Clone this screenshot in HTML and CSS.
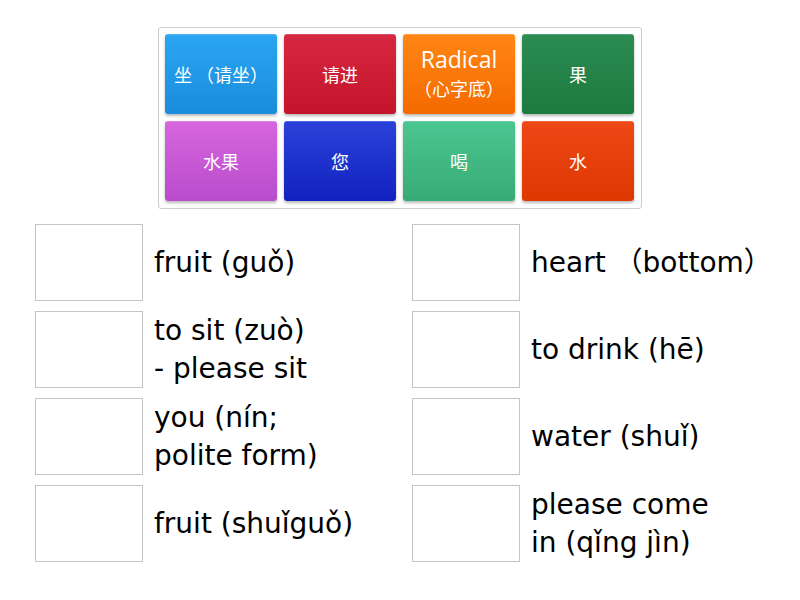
FILE: index.html
```html
<!DOCTYPE html>
<html lang="en">
<head>
<meta charset="utf-8">
<title>Match up</title>
<link rel="stylesheet" href="styles.css">
</head>
<body>
<div class="panel">
  <div class="tile blue"><span class="cjk">坐 （请坐）</span></div>
  <div class="tile red"><span class="cjk">请进</span></div>
  <div class="tile orange">Radical<span class="cjk">（心字底）</span></div>
  <div class="tile green"><span class="cjk">果</span></div>
  <div class="tile purple"><span class="cjk">水果</span></div>
  <div class="tile navy"><span class="cjk">您</span></div>
  <div class="tile mint"><span class="cjk">喝</span></div>
  <div class="tile vermilion"><span class="cjk">水</span></div>
</div>
<div class="items">
  <div class="item"><div class="slot"></div><div class="label">fruit (guǒ)</div></div>
  <div class="item"><div class="slot"></div><div class="label">heart （bottom）</div></div>
  <div class="item"><div class="slot"></div><div class="label">to sit (zuò)<br>- please sit</div></div>
  <div class="item"><div class="slot"></div><div class="label">to drink (hē)</div></div>
  <div class="item"><div class="slot"></div><div class="label">you (nín;<br>polite form)</div></div>
  <div class="item"><div class="slot"></div><div class="label">water (shuǐ)</div></div>
  <div class="item"><div class="slot"></div><div class="label">fruit (shuǐguǒ)</div></div>
  <div class="item"><div class="slot"></div><div class="label">please come<br>in (qǐng jìn)</div></div>
</div>
</body>
</html>
```
FILE: styles.css
```css
html, body {
  margin: 0;
  padding: 0;
  background: #ffffff;
}

body {
  font-family: "DejaVu Sans", "Noto Sans CJK SC", sans-serif;
  color: #000;
}

.panel {
  box-sizing: border-box;
  width: 484px;
  margin: 27px auto 0 158px;
  padding: 6px 7px 7px 6px;
  border: 1px solid #cfcfcf;
  border-radius: 3px;
  display: grid;
  grid-template-columns: repeat(4, 112px);
  grid-auto-rows: 80px;
  column-gap: 7px;
  row-gap: 7px;
}

.tile {
  border-radius: 3px;
  display: flex;
  align-items: center;
  justify-content: center;
  flex-wrap: wrap;
  align-content: center;
  text-align: center;
  color: #fff;
  font-family: "Open Sans", "Noto Sans CJK SC", sans-serif;
  font-size: 23px;
  line-height: 29px;
  box-shadow: 0 2px 3px rgba(0, 0, 0, 0.28), inset 0 1px 0 rgba(255, 255, 255, 0.18);
  padding: 0 1px;
}

.cjk {
  font-family: "Noto Sans CJK SC", sans-serif;
  font-size: 18px;
  font-weight: 400;
}

.blue { background: linear-gradient(#2aa6f2, #1a8cdc); }
.red { background: linear-gradient(#d62840, #c4142b); }
.orange { background: linear-gradient(#ff8614, #f46a00); }
.green { background: linear-gradient(#2c8c52, #1d7a3f); }
.purple { background: linear-gradient(#d766de, #b84ccb); }
.navy { background: linear-gradient(#2b42d8, #1121bf); }
.mint { background: linear-gradient(#4cc691, #37ab75); }
.vermilion { background: linear-gradient(#ee4817, #de3700); }

.items {
  margin: 15px 0 0 35px;
  display: grid;
  grid-template-columns: 370px 370px;
  grid-auto-rows: 77px;
  column-gap: 7px;
  row-gap: 10px;
}

.item {
  display: flex;
  align-items: center;
}

.slot {
  box-sizing: border-box;
  flex: 0 0 108px;
  height: 77px;
  border: 1px solid #c4c4c4;
  background: #fff;
}

.label {
  margin-left: 11px;
  font-size: 28px;
  line-height: 38px;
  white-space: nowrap;
}
```
